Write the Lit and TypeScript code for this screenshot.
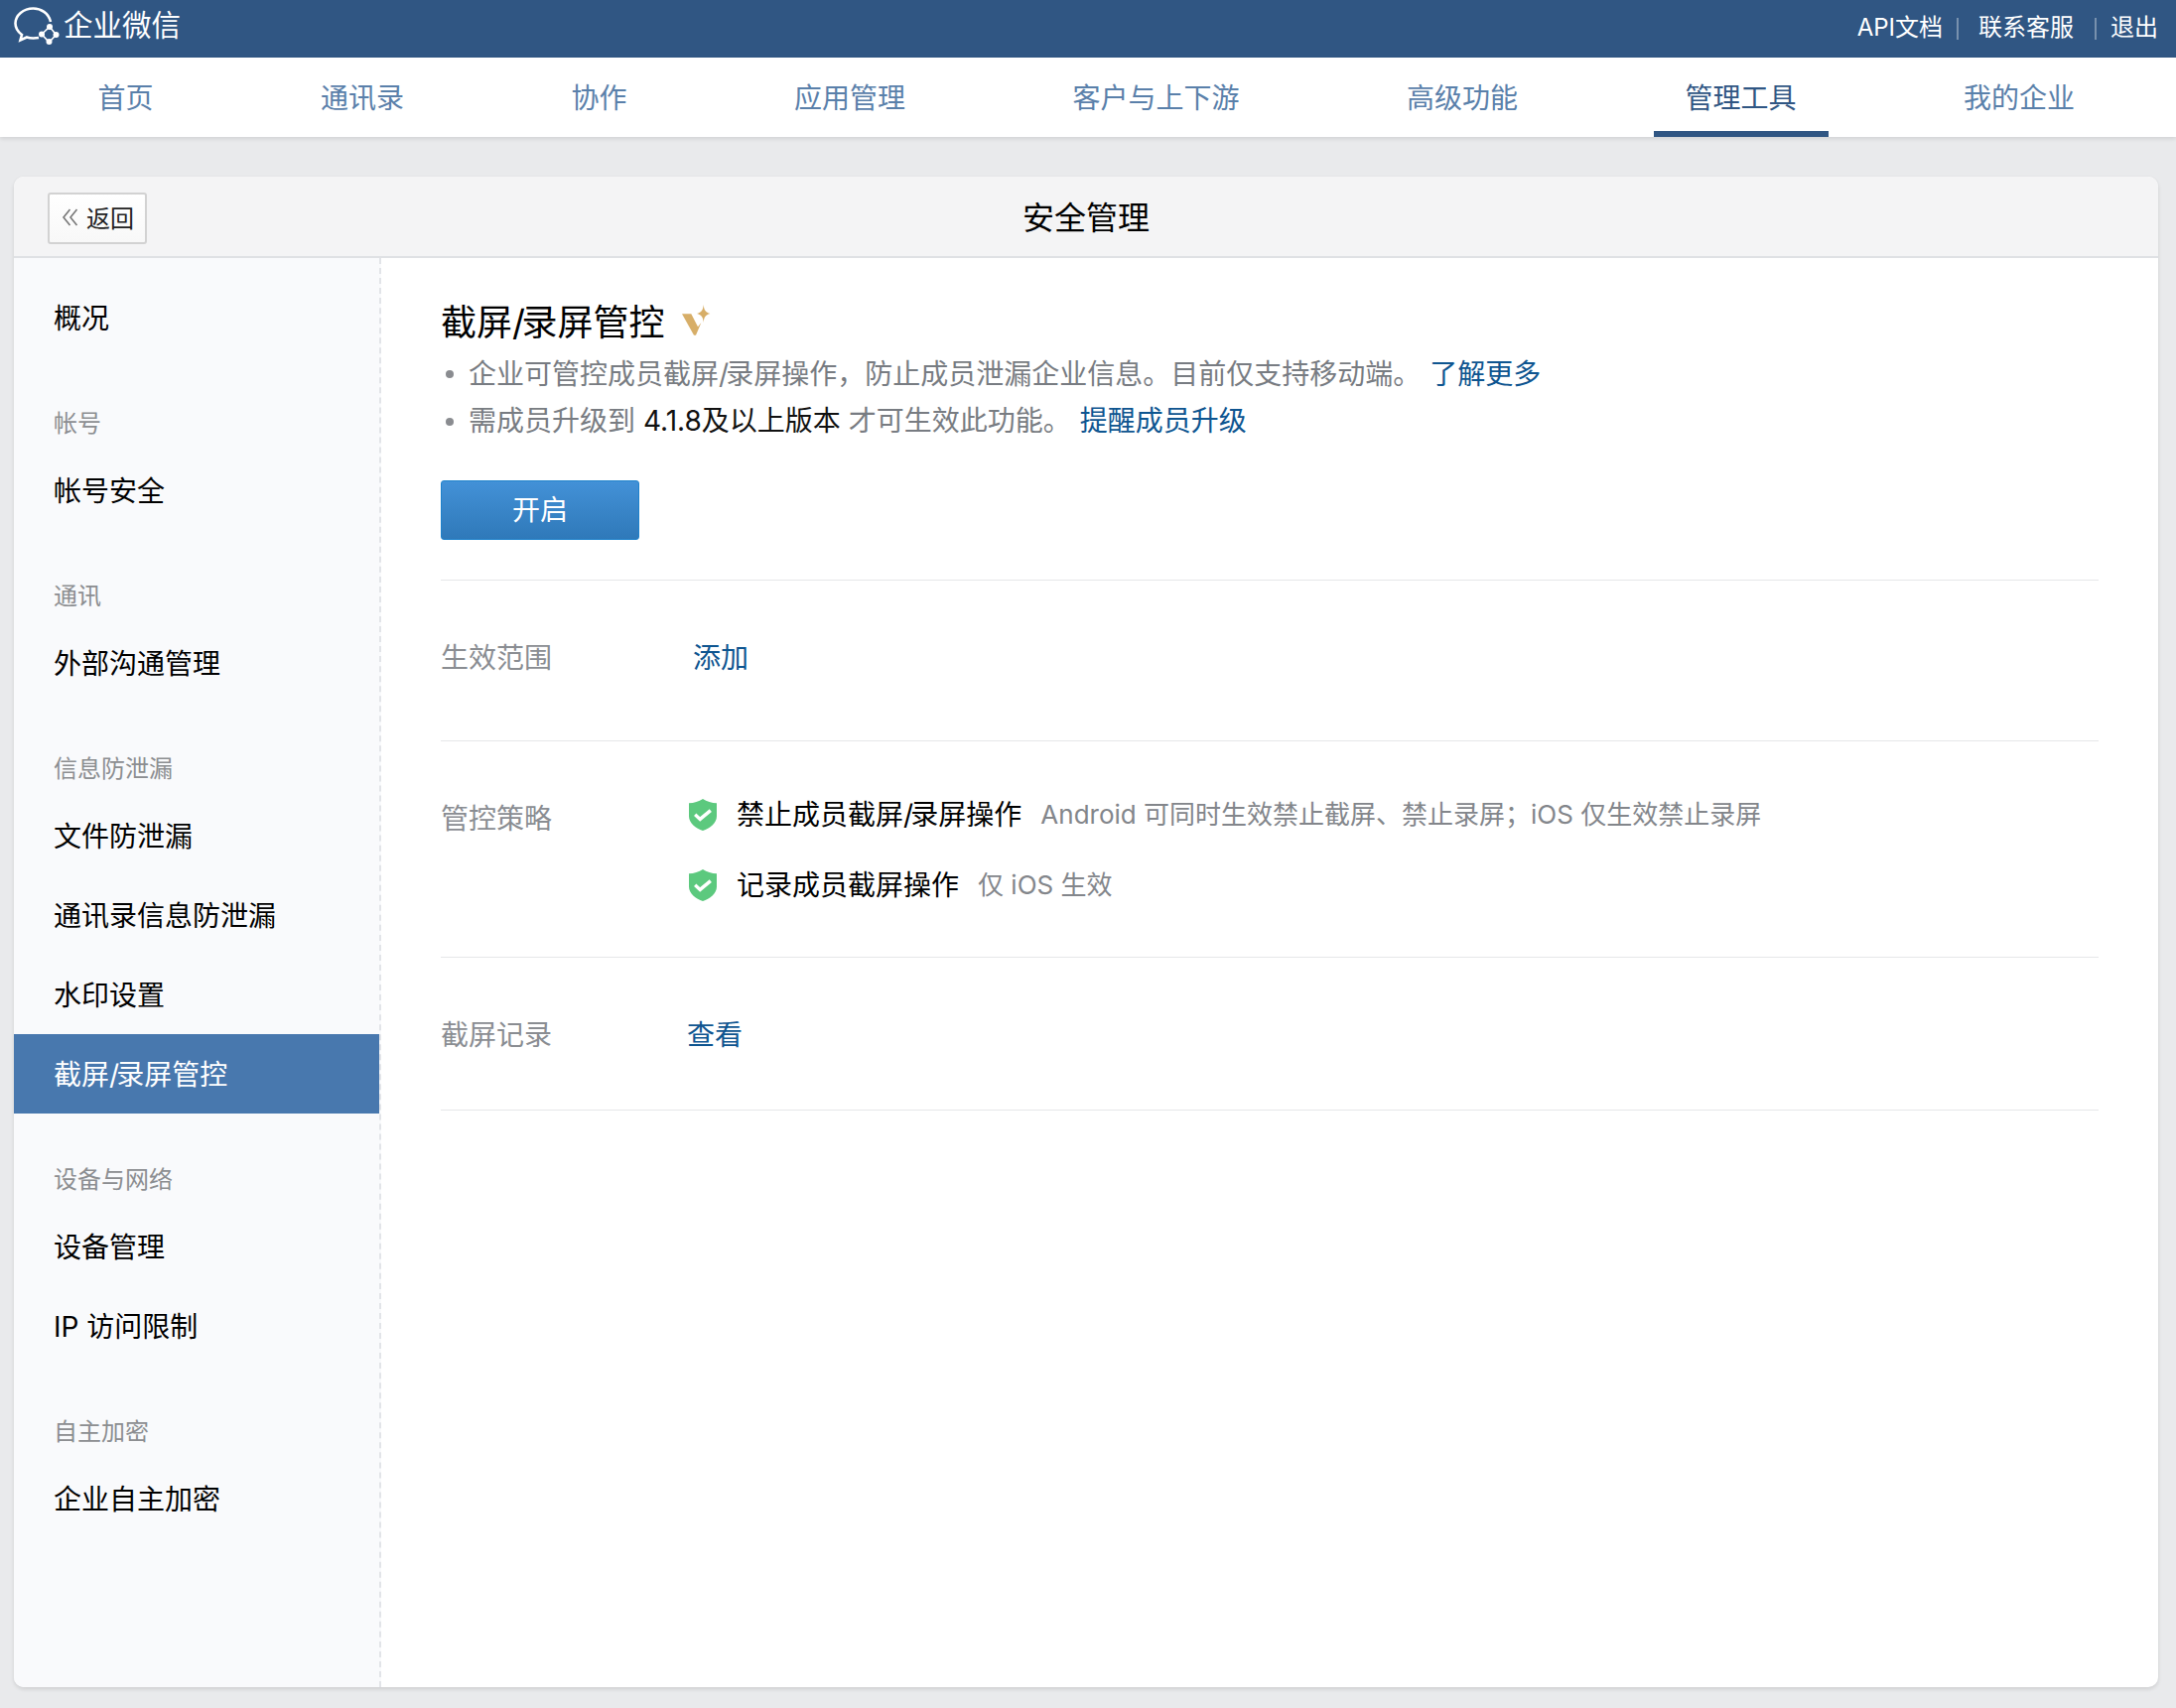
import {html, LitElement, css} from 'lit';
import {customElement} from 'lit/decorators.js';

const TABS = ['首页', '通讯录', '协作', '应用管理', '客户与上下游', '高级功能', '管理工具', '我的企业'];

const GROUPS: {title?: string; items: string[]}[] = [
  {items: ['概况']},
  {title: '帐号', items: ['帐号安全']},
  {title: '通讯', items: ['外部沟通管理']},
  {title: '信息防泄漏', items: ['文件防泄漏', '通讯录信息防泄漏', '水印设置', '截屏/录屏管控']},
  {title: '设备与网络', items: ['设备管理', 'IP 访问限制']},
  {title: '自主加密', items: ['企业自主加密']},
];

// the reference slash is narrower than the one in Inter
const slashed = (text: string) => {
  const [a, b] = text.split('/');
  return b === undefined ? text : html`${a}<span class="sl">/</span>${b}`;
};

const shield = html`<svg class="shield" viewBox="0 0 28 32">
  <path d="M14 0C18 2.6 23 4.2 28 4.2V17.5C28 24.5 21 29.5 14 32C7 29.5 0 24.5 0 17.5V4.2C5 4.2 10 2.6 14 0Z" fill="#5cc97e" />
  <path d="M6.2 15.8L11.2 20.4L21.8 11.6" fill="none" stroke="#fff" stroke-width="3.4" />
</svg>`;

@customElement('app-root')
export class AppRoot extends LitElement {
  static styles = css`
    :host {
      display: block;
      height: 1721px;
      overflow: hidden;
      background: #e9eaec;
      font-family: Inter, "Noto Sans CJK SC", sans-serif;
      color: #000;
    }
    .sl {
      letter-spacing: -0.1em;
    }

    .top {
      height: 58px;
      background: #305683;
      display: flex;
      align-items: center;
      justify-content: space-between;
      padding: 0 18px 0 14px;
      color: #fff;
    }
    .brand {
      display: flex;
      align-items: center;
      gap: 4px;
      font-size: 29.5px;
      line-height: 50px;
    }
    .brand svg {
      width: 46px;
      height: 38px;
      margin-bottom: 6px;
    }
    .brand span {
      margin-bottom: 8px;
    }
    .links {
      display: flex;
      align-items: center;
      font-size: 24px;
      line-height: 34px;
      margin-bottom: 3px;
    }
    .sep {
      width: 2px;
      height: 22px;
      margin: 2px 20px 0 14px;
      background: rgba(255, 255, 255, 0.35);
    }
    .sep.wide {
      margin-left: 21px;
      margin-right: 14px;
    }

    .nav {
      height: 80px;
      background: #fff;
      display: flex;
      gap: 104.5px;
      padding-left: 66.5px;
      box-shadow: 0 2px 4px rgba(0, 0, 0, 0.1);
      position: relative;
    }
    .tab {
      padding: 0 32px;
      font-size: 28px;
      line-height: 82px;
      color: #5a80aa;
      border-bottom: 6px solid transparent;
      height: 74px;
    }
    .tab.on {
      color: #305683;
      border-bottom-color: #305683;
    }

    .card {
      margin: 40px 18px 0 14px;
      height: 1522px;
      border-radius: 10px;
      background: #fff;
      box-shadow: 0 2px 4px rgba(0, 0, 0, 0.12);
      overflow: hidden;
      display: flex;
      flex-direction: column;
    }
    .head {
      box-sizing: content-box;
      height: 78px;
      padding-bottom: 2px;
      flex: none;
      background: #f4f4f5;
      border-bottom: 2px solid #dfe1e4;
      display: flex;
      align-items: center;
      justify-content: center;
      position: relative;
      font-size: 32px;
    }
    .back {
      position: absolute;
      left: 34px;
      top: 16px;
      box-sizing: border-box;
      width: 100px;
      height: 52px;
      border: 2px solid #d2d2d2;
      border-radius: 3px;
      background: linear-gradient(#fff, #f8f8f8);
      font-size: 24px;
      line-height: 46px;
      color: #222;
      display: flex;
      align-items: center;
      padding: 2px 0 0 12px;
      gap: 7px;
    }
    .back svg {
      width: 18px;
      height: 18px;
      margin-top: -4px;
    }

    .body {
      flex: 1;
      display: flex;
      min-height: 0;
    }
    .side {
      width: 368px;
      flex: none;
      background: #f9fafc;
      border-right: 2px dashed #e2e4e8;
      padding-top: 20px;
    }
    .group {
      margin-bottom: 46px;
    }
    .gtitle {
      height: 40px;
      line-height: 42px;
      margin-bottom: 8px;
      padding-left: 40px;
      font-size: 24px;
      color: #8c8e91;
    }
    .item {
      height: 80px;
      line-height: 82px;
      padding-left: 40px;
      font-size: 28px;
    }
    .item.on {
      background: #4878ae;
      color: #fff;
    }

    .main {
      flex: 1;
      padding: 0 60px;
    }
    .sec {
      border-bottom: 1px solid #e6e7e9;
    }
    .intro {
      padding: 40px 0;
    }
    h1 {
      margin: 0;
      font-size: 36px;
      font-weight: 400;
      line-height: 48px;
      height: 48px;
      display: flex;
      align-items: center;
      gap: 18px;
    }
    h1 span {
      margin-top: 2px;
    }
    h1 svg {
      width: 28px;
      height: 34px;
      margin-top: 2px;
      overflow: visible;
    }
    ul {
      margin: 4px 0 0;
      padding: 0;
      list-style: none;
      font-size: 28px;
      line-height: 48px;
      color: #787c82;
    }
    li {
      padding-left: 28px;
      position: relative;
    }
    li:first-child {
      padding-top: 1px;
      margin-bottom: -1px;
    }
    li::before {
      content: '';
      position: absolute;
      left: 5px;
      top: 21px;
      width: 8px;
      height: 8px;
      border-radius: 50%;
      background: #8a8c90;
    }
    .dark {
      color: #111;
    }
    .link {
      color: #0e5590;
      margin-left: 9px;
    }
    .btn {
      margin-top: 36px;
      box-sizing: border-box;
      width: 200px;
      height: 60px;
      border: 1px solid #1e82cc;
      border-radius: 3px;
      background: linear-gradient(#4391d7, #2f79b9);
      color: #fff;
      font-size: 28px;
      line-height: 58px;
      text-align: center;
    }

    .row {
      display: flex;
      font-size: 28px;
      line-height: 40px;
    }
    .label {
      width: 248px;
      flex: none;
      color: #8a8d92;
    }
    .val {
      color: #0e5590;
    }
    .scope {
      padding: 58px 0 63px;
    }
    .scope .val {
      margin-left: 6px;
    }
    .policy {
      padding: 58px 0 52px;
    }
    .record {
      padding: 58px 0 55px;
    }
    .rules {
      margin-top: -4px;
      display: flex;
      flex-direction: column;
      gap: 31px;
    }
    .rule {
      display: flex;
      align-items: center;
    }
    .shield {
      width: 28px;
      height: 32px;
      margin: 0 20px 0 2px;
      flex: none;
    }
    .note {
      color: #83868b;
      font-size: 26px;
      margin-left: 19px;
    }
  `;

  render() {
    return html`
      <div class="top">
        <div class="brand">
          <svg viewBox="0 0 46 38">
            <path d="M37 15C35 6 27 1.5 19.5 1.5C9.5 1.5 1.5 8.5 1.5 16.5C1.5 21.5 4 25 8 28L6.5 33.5L13 30.5C16 31.5 20 31.8 25 31" fill="none" stroke="#fff" stroke-width="2.6" />
            <path d="M36 20L42.5 28L35.5 35.5L28 27.5Z" fill="none" stroke="#fff" stroke-width="1.6" />
            <circle cx="36" cy="20" r="3" fill="#fff" />
            <circle cx="42.5" cy="28" r="3" fill="#fff" />
            <circle cx="35.5" cy="35" r="3" fill="#fff" />
            <circle cx="28" cy="27.5" r="3" fill="#fff" />
          </svg>
          <span>企业微信</span>
        </div>
        <div class="links">
          <span>API文档</span><i class="sep"></i><span>联系客服</span><i class="sep wide"></i><span>退出</span>
        </div>
      </div>
      <div class="nav">
        ${TABS.map((t) => html`<div class="tab ${t === '管理工具' ? 'on' : ''}">${t}</div>`)}
      </div>
      <div class="card">
        <div class="head">
          <div class="back">
            <svg viewBox="0 0 18 18"><path d="M8.5 1L2 9L8.5 17M15.5 1L9 9L15.5 17" fill="none" stroke="#777" stroke-width="1.6" /></svg>
            返回
          </div>
          安全管理
        </div>
        <div class="body">
          <div class="side">
            ${GROUPS.map((g) => html`<div class="group">
              ${g.title ? html`<div class="gtitle">${g.title}</div>` : ''}
              ${g.items.map((i) => html`<div class="item ${i === '截屏/录屏管控' ? 'on' : ''}">${slashed(i)}</div>`)}
            </div>`)}
          </div>
          <div class="main">
            <div class="sec intro">
              <h1>
                <span>${slashed('截屏/录屏管控')}</span>
                <svg viewBox="0 0 28 34">
                  <path d="M0 8.3H9.3L16 21.3L19.3 17.3L14 29.7H12Z" fill="#d7ae68" />
                  <path d="M21.7 -1C22.2 4.5 23.6 6.8 28.4 8C23.6 9.2 22.2 11.5 21.7 17C21.2 11.5 19.8 9.2 15 8C19.8 6.8 21.2 4.5 21.7 -1Z" fill="#d7ae68" />
                </svg>
              </h1>
              <ul>
                <li>${slashed('企业可管控成员截屏/录屏操作，防止成员泄漏企业信息。目前仅支持移动端。')}<span class="link">了解更多</span></li>
                <li>需成员升级到 <span class="dark">4.1.8及以上版本</span> 才可生效此功能。<span class="link">提醒成员升级</span></li>
              </ul>
              <div class="btn">开启</div>
            </div>
            <div class="sec row scope">
              <div class="label">生效范围</div>
              <div class="val">添加</div>
            </div>
            <div class="sec row policy">
              <div class="label">管控策略</div>
              <div class="rules">
                <div class="rule">${shield}<span>${slashed('禁止成员截屏/录屏操作')}</span><span class="note">Android 可同时生效禁止截屏、禁止录屏；iOS 仅生效禁止录屏</span></div>
                <div class="rule">${shield}<span>记录成员截屏操作</span><span class="note">仅 iOS 生效</span></div>
              </div>
            </div>
            <div class="sec row record">
              <div class="label">截屏记录</div>
              <div class="val">查看</div>
            </div>
          </div>
        </div>
      </div>
    `;
  }
}
